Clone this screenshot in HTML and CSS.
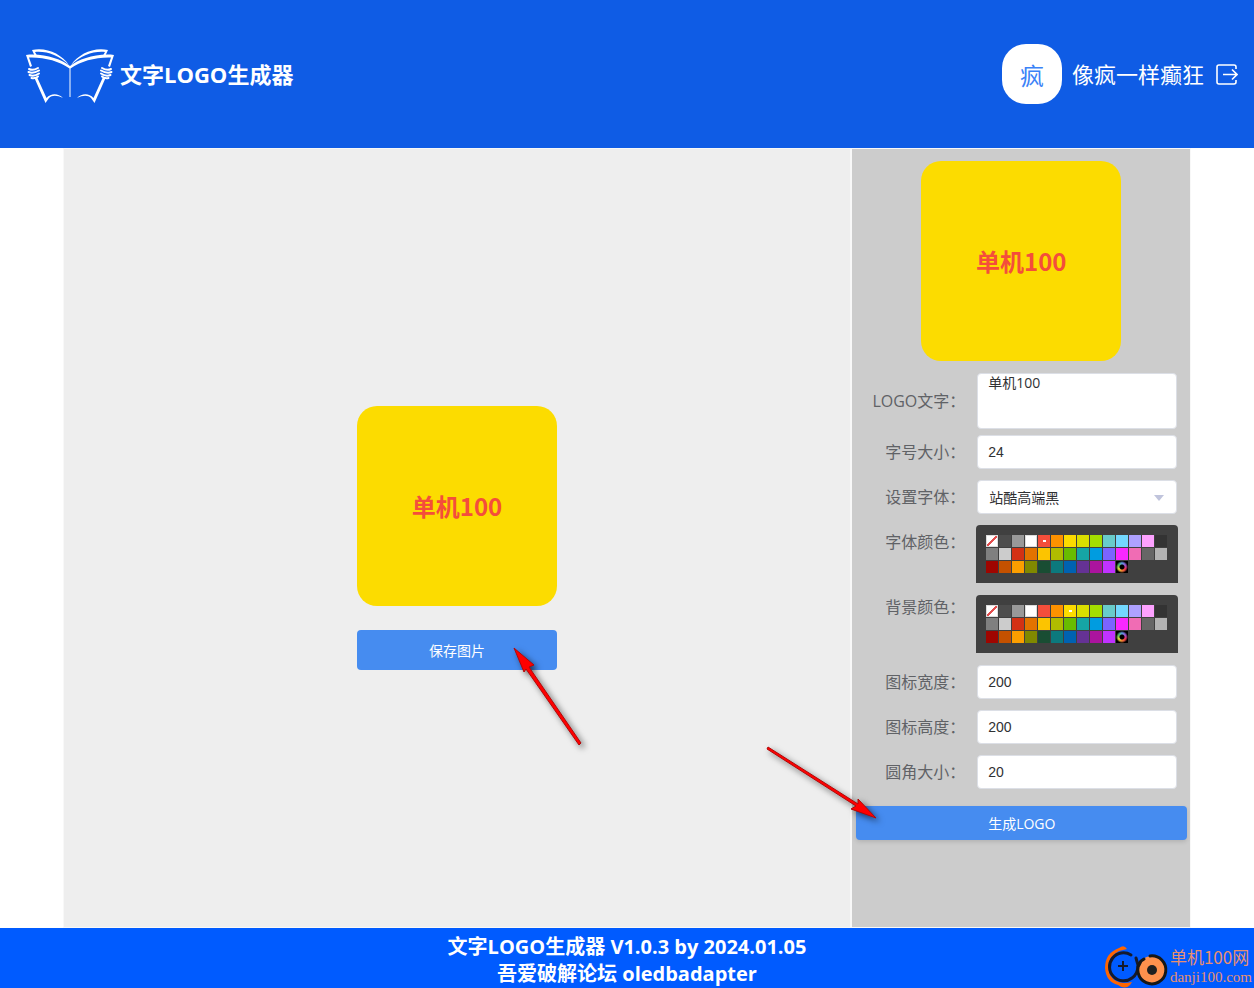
FILE: index.html
```html
<!DOCTYPE html>
<html lang="zh-CN">
<head>
<meta charset="utf-8">
<title>文字LOGO生成器</title>
<link rel="stylesheet" href="styles.css">
</head>
<body>
<div class="page">
  <header class="header">
    <div class="brand">
      <svg class="brand-logo" viewBox="0 0 90 58" fill="#fff" aria-hidden="true">
        <path d="M1 10C18 8 36 14 45 21C54 14 72 8 89 10L85 22L83 21L86 12.500C71 12 56 16 45.500 23.500V52H44.500V23.500C34 16 19 12 4 12.500L7 21L5 22Z"/>
        <path d="M7 5C22 2 36 9 44 20C33 10 22 6 10 7L12 10.500H9.500Z"/>
        <path d="M83 5C68 2 54 9 46 20C57 10 68 6 80 7L78 10.500H80.500Z"/>
        <path d="M9 32L12 32L21.500 53C26 48 33 48 38 53C32 50 27 50 24 53L20.500 58Z"/>
        <path d="M81 32L78 32L68.500 53C64 48 57 48 52 53C58 50 63 50 66 53L69.500 58Z"/>
        <path d="M4 24Q8 26 13 23M3.500 27Q8 29 14 25.500M4.500 30Q9 32 14 28.500M6.500 33Q10 34 13 31.500M86 24Q82 26 77 23M86.500 27Q82 29 76 25.500M85.500 30Q81 32 76 28.500M83.500 33Q80 34 77 31.500" fill="none" stroke="#fff" stroke-width="2" stroke-linecap="round"/>
      </svg>
      <h1 class="brand-title">文字LOGO生成器</h1>
    </div>
    <div class="user">
      <span class="avatar">疯</span>
      <span class="user-name">像疯一样癫狂</span>
      <button class="logout" type="button" aria-label="退出">
        <svg viewBox="0 0 22 22" fill="none" stroke="#fff" stroke-width="1.600">
          <path d="M20 6V4Q20 2 18 2H3Q1 2 1 4V19Q1 21 3 21H18Q20 21 20 19V17"/>
          <path d="M7 11.500H20.500M16 6.500L21 11.500L16 16.500"/>
        </svg>
      </button>
    </div>
  </header>

  <main class="workspace">
    <section class="canvas">
      <div class="logo-tile">单机100</div>
      <button class="btn btn-save" type="button">保存图片</button>
    </section>

    <form class="settings">
      <div class="logo-tile">单机100</div>
      <div class="fields">
        <div class="row row-text">
          <label for="text">LOGO文字：</label>
          <textarea id="text" class="control textarea">单机100</textarea>
        </div>
        <div class="row">
          <label for="size">字号大小：</label>
          <input id="size" class="control" type="text" value="24">
        </div>
        <div class="row">
          <label for="font">设置字体：</label>
          <div class="select-wrap">
            <select id="font" class="control select"><option>站酷高端黑</option></select>
          </div>
        </div>
        <div class="row row-palette">
          <span class="label" id="fg-label">字体颜色：</span>
          <div class="palette" role="radiogroup" aria-labelledby="fg-label" data-name="fg" data-value="#f44e3b"></div>
        </div>
        <div class="row row-palette row-background">
          <span class="label" id="bg-label">背景颜色：</span>
          <div class="palette" role="radiogroup" aria-labelledby="bg-label" data-name="bg" data-value="#fcdc00"></div>
        </div>
        <div class="row">
          <label for="width">图标宽度：</label>
          <input id="width" class="control" type="text" value="200">
        </div>
        <div class="row">
          <label for="height">图标高度：</label>
          <input id="height" class="control" type="text" value="200">
        </div>
        <div class="row">
          <label for="radius">圆角大小：</label>
          <input id="radius" class="control" type="text" value="20">
        </div>
      </div>
      <button class="btn btn-create" type="button">生成LOGO</button>
    </form>
  </main>

  <footer class="footer">
    <div>文字LOGO生成器 V1.0.3 by 2024.01.05</div>
    <div>吾爱破解论坛 oledbadapter</div>
    <div class="watermark">
      <svg class="watermark-logo" viewBox="0 0 64 44" fill="none" aria-hidden="true">
        <path d="M22 5Q19 0 14 4Q0 9 0 24Q1 38 13 41Q20 46 25 41L27 38Q12 42 5 31Q-1 15 14 7Z" fill="#ff6500"/>
        <path d="M26 11A14 14 0 1 0 27 34Q33 30 33 21L31 14" stroke="#151a2c" stroke-width="3" stroke-linecap="round"/>
        <path d="M18 17V27M13 22H23" stroke="#151a2c" stroke-width="2"/>
        <circle cx="47" cy="26" r="14" fill="#ff914d"/>
        <path d="M45 12A14 14 0 1 1 36 17L39 15M33 23L36 17" stroke="#171717" stroke-width="3" stroke-linecap="round"/>
        <circle cx="47" cy="26" r="5" fill="#202020"/>
      </svg>
      <div class="watermark-text">
        <div class="watermark-name">单机100网</div>
        <div class="watermark-site">danji100.com</div>
      </div>
    </div>
  </footer>

  <svg class="arrow arrow-save" viewBox="0 0 80 110" aria-hidden="true">
    <path d="M4 8L24 25L19 27L71 103L69 105L16 29L14 32Z"/>
  </svg>
  <svg class="arrow arrow-create" viewBox="0 0 120 80" aria-hidden="true">
    <path d="M8 7L98 64L98 59L116 78L91 69L96 66L7 9Z"/>
  </svg>
</div>
<script src="palette.js"></script>
</body>
</html>
```

FILE: styles.css
```css
* { box-sizing: border-box; }

body {
  margin: 0;
  font-family: "Open Sans", "Noto Sans CJK SC", sans-serif;
  background: #fff;
}

button, input, textarea, select { font-family: inherit; margin: 0; }

.page {
  position: relative;
  display: flex;
  flex-direction: column;
  min-height: 100vh;
}

.header {
  display: flex;
  align-items: center;
  justify-content: space-between;
  height: 15vh;
  min-height: 100px;
  padding: 0 16px 0 25px;
  color: #fff;
  background: #0f5ce5;
}

.brand { display: flex; align-items: center; gap: 5px; }
.brand-logo { width: 90px; height: 58px; overflow: visible; }
.brand-title { margin: 0; font-size: 22px; line-height: 32px; font-weight: 700; }

.user { display: flex; align-items: center; }

.avatar {
  width: 60px;
  height: 60px;
  margin-right: 10px;
  border-radius: 24px;
  background: #fff;
  color: #3b82f7;
  font-size: 24px;
  line-height: 64px;
  text-align: center;
}

.user-name { margin-right: 12px; font-size: 22px; line-height: 32px; }

.logout {
  display: flex;
  padding: 0;
  border: 0;
  background: none;
  cursor: pointer;
}
.logout svg { width: 22px; height: 22px; }

.workspace {
  flex: 1;
  display: grid;
  grid-template-columns: 1fr 340px;
  width: 90%;
  margin: 0 auto;
}

.canvas, .settings { border: 1px solid #f8f8f8; }

.canvas {
  display: flex;
  flex-direction: column;
  align-items: center;
  justify-content: center;
  gap: 24px;
  background: #eee;
}

.settings {
  display: flex;
  flex-direction: column;
  align-items: center;
  padding-top: 12px;
  background: #ccc;
}

.logo-tile {
  display: flex;
  align-items: center;
  justify-content: center;
  width: 200px;
  height: 200px;
  border-radius: 20px;
  background: #fcdc00;
  color: #f44e3b;
  font: 700 24px/32px "Noto Sans CJK SC", sans-serif;
}

.btn {
  border: 0;
  border-radius: 4px;
  color: #fff;
  background: #468cf0;
  font-size: 14px;
  cursor: pointer;
}
.btn-save { width: 200px; height: 40px; }
.btn-create {
  align-self: stretch;
  height: 34px;
  margin: 6px 3px 0 4px;
  box-shadow: 0 2px 4px rgba(0, 0, 0, .12);
}

.fields { align-self: stretch; padding: 12px 13px 0 0; }

.row {
  display: grid;
  grid-template-columns: 113px 1fr;
  column-gap: 12px;
  align-items: center;
  margin-bottom: 11px;
}
.row-text { margin-bottom: 6px; }
.row-palette { align-items: start; margin-bottom: 12px; }

.row label, .label {
  color: #606266;
  font-size: 16px;
  line-height: 34px;
  text-align: right;
  white-space: nowrap;
}
.row-background .label { line-height: 24px; }

.control {
  display: block;
  width: 100%;
  height: 34px;
  padding: 0 10px;
  border: 1px solid #dcdfe6;
  border-radius: 4px;
  background: #fff;
  color: #303133;
  font: 14px "Liberation Sans", "Noto Sans CJK SC", sans-serif;
}
.textarea {
  height: 56px;
  resize: none;
  font-family: "Open Sans", "Noto Sans CJK SC", sans-serif;
  line-height: 18px;
}

.select-wrap { position: relative; }
.select { appearance: none; padding: 2px 11px 0; }
.select-wrap::after {
  content: "";
  position: absolute;
  top: 15px;
  right: 13px;
  border: 5px solid transparent;
  border-top: 6px solid #c0c4dc;
  border-bottom: 0;
  pointer-events: none;
}

.palette {
  display: grid;
  grid-template-columns: repeat(14, 12px);
  gap: 1px;
  height: 58px;
  margin: 0 -1px;
  padding: 10px;
  border-radius: 4px 4px 0 0;
  background: #404040;
}

.swatch {
  appearance: none;
  width: 12px;
  height: 12px;
  margin: 0;
  cursor: pointer;
}
.swatch:checked {
  background-image: linear-gradient(#fff, #fff);
  background-size: 3px 2px;
  background-position: center;
  background-repeat: no-repeat;
}
.swatch-light { border: 1px solid #ddd; }
.swatch-none {
  border: 1px solid #ddd;
  background: linear-gradient(135deg, #fff 44%, #e34f4f 44%, #e34f4f 56%, #fff 56%);
}
.swatch-custom {
  background:
    radial-gradient(circle, #000 2px, transparent 3px, transparent 4px, #000 6px),
    conic-gradient(#5a9be8, #9b4fd0, #f03050, #f08030, #e0e040, #50c060, #5a9be8);
}

.footer {
  position: relative;
  height: 60px;
  padding-top: 5px;
  color: #fff;
  background: #005bff;
  font-size: 20px;
  line-height: 27px;
  font-weight: 700;
  text-align: center;
}

.watermark {
  position: absolute;
  right: 2px;
  bottom: 0;
  display: flex;
  align-items: center;
  gap: 1px;
  color: #e89070;
  font-weight: 400;
  text-align: left;
}
.watermark-logo { width: 64px; height: 44px; overflow: visible; }
.watermark-name { font: 17px/22px "Noto Sans CJK SC", sans-serif; }
.watermark-site { font: 15px/18px "Liberation Serif", serif; }

.arrow {
  position: absolute;
  fill: #f00;
  stroke: #b00808;
  stroke-width: 1;
  overflow: visible;
  filter: drop-shadow(3px 3px 3px rgba(0, 0, 0, .6));
  pointer-events: none;
}
.arrow-save { left: 510px; top: 640px; width: 80px; height: 110px; }
.arrow-create { left: 760px; top: 740px; width: 120px; height: 80px; }
```

FILE: palette.js
```js
const colors = [
  "none", "#4d4d4d", "#999999", "#ffffff", "#f44e3b", "#fe9200", "#fcdc00",
  "#dbdf00", "#a4dd00", "#68ccca", "#73d8ff", "#aea1ff", "#fda1ff", "#333333",
  "#808080", "#cccccc", "#d33115", "#e27300", "#fcc400", "#b0bc00", "#68bc00",
  "#16a5a5", "#009ce0", "#7b64ff", "#fa28ff", "#f06cb4", "#666666", "#b3b3b3",
  "#9f0500", "#c45100", "#fb9e00", "#808900", "#194d33", "#0c797d", "#0062b1",
  "#653294", "#ab149e", "#c032ff", "custom"
];

document.querySelectorAll(".palette").forEach(palette => {
  colors.forEach(color => {
    const swatch = document.createElement("input");
    swatch.type = "radio";
    swatch.name = palette.dataset.name;
    swatch.value = color;
    swatch.className = "swatch";
    swatch.setAttribute("aria-label", color);
    if (color === "none" || color === "custom") {
      swatch.classList.add("swatch-" + color);
    } else {
      swatch.style.backgroundColor = color;
    }
    if (color === "#ffffff") swatch.classList.add("swatch-light");
    swatch.checked = color === palette.dataset.value;
    palette.append(swatch);
  });
});
```
